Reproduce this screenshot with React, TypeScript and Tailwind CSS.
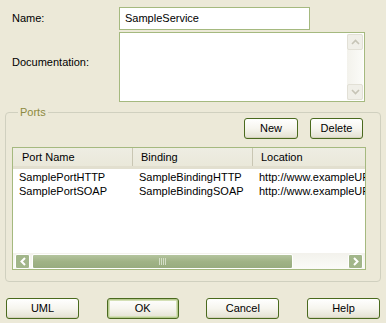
import React from 'react';

// Botão estilo XP (tema oliva)
function XpButton({ label, width, isDefault }: { label: string; width: string; isDefault?: boolean }) {
  return (
    <button
      className={`${width} h-[21px] rounded-[3px] border border-[#4A6A1E] bg-gradient-to-b from-[#FFFFFF] via-[#F6F5EE] to-[#E3E1D1] text-[11px] text-black leading-none ${
        isDefault ? 'shadow-[inset_0_0_0_1px_#B6C98E,inset_0_0_0_2px_#D4E0B6]' : 'shadow-[inset_0_-1px_0_#D6D2BE]'
      }`}
    >
      {label}
    </button>
  );
}

function ChevronUp({ color }: { color: string }) {
  return (
    <svg width="9" height="6" viewBox="0 0 9 6">
      <path d="M1 5 L4.5 1.5 L8 5" fill="none" stroke={color} strokeWidth="1.6" />
    </svg>
  );
}

function ChevronDown({ color }: { color: string }) {
  return (
    <svg width="9" height="6" viewBox="0 0 9 6">
      <path d="M1 1 L4.5 4.5 L8 1" fill="none" stroke={color} strokeWidth="1.6" />
    </svg>
  );
}

function ChevronLeft() {
  return (
    <svg width="6" height="9" viewBox="0 0 6 9">
      <path d="M5 1 L1.5 4.5 L5 8" fill="none" stroke="#FFFFFF" strokeWidth="2" />
    </svg>
  );
}

function ChevronRight() {
  return (
    <svg width="6" height="9" viewBox="0 0 6 9">
      <path d="M1 1 L4.5 4.5 L1 8" fill="none" stroke="#FFFFFF" strokeWidth="2" />
    </svg>
  );
}

const ports = [
  { name: 'SamplePortHTTP', binding: 'SampleBindingHTTP', location: 'http://www.exampleURL.com/http' },
  { name: 'SamplePortSOAP', binding: 'SampleBindingSOAP', location: 'http://www.exampleURL.com/soap' },
];

export default function App() {
  return (
    <div className="w-[386px] h-[323px] bg-[#ECE9D8] font-['Tahoma','Liberation_Sans',sans-serif] text-[11px] text-black pt-[7px] overflow-hidden">
      {/* Nome */}
      <div className="flex items-center h-[23px]">
        <span className="w-[119px] pl-[12px]">Name:</span>
        <div className="w-[191px] h-[23px] border border-[#A5B97F] bg-white flex items-center px-[5px]">SampleService</div>
      </div>

      {/* Documentação */}
      <div className="flex h-[70px] mt-[2px]">
        <span className="w-[119px] pl-[12px] mt-[22px]">Documentation:</span>
        <div className="w-[246px] h-[70px] border border-[#A5B97F] bg-white flex justify-end p-[1px]">
          <div className="w-[16px] h-full bg-gradient-to-r from-[#F3F2EC] to-[#FBFBF8] flex flex-col justify-between">
            <div className="h-[16px] rounded-[2px] border border-[#E2E0D6] bg-[#F0EFE8] flex items-center justify-center">
              <ChevronUp color="#C6C4B6" />
            </div>
            <div className="h-[16px] rounded-[2px] border border-[#E2E0D6] bg-[#F0EFE8] flex items-center justify-center">
              <ChevronDown color="#C6C4B6" />
            </div>
          </div>
        </div>
      </div>

      {/* Portas */}
      <fieldset className="mx-[5px] mt-[4px] h-[176px] border border-[#D0D0BF] rounded-[4px] px-[6px] pb-[10px]">
        <legend className="ml-[6px] px-[2px] text-[#8C8A40] leading-[13px]">Ports</legend>

        <div className="flex justify-end gap-[12px] pr-[11px] -mt-[1px]">
          <XpButton label="New" width="w-[54px]" />
          <XpButton label="Delete" width="w-[53px]" />
        </div>

        <div className="mt-[8px] w-[354px] h-[123px] border border-[#A5B97F] bg-white flex flex-col overflow-hidden">
          {/* Cabeçalho */}
          <div className="flex h-[21px] shrink-0 bg-gradient-to-b from-[#EEEDE3] to-[#EAE8DA] border-b-[3px] border-[#E2DFCF]">
            <div className="w-[120px] pl-[9px] flex items-center border-r border-[#C9C6B3]">Port Name</div>
            <div className="w-[120px] pl-[8px] flex items-center border-r border-[#C9C6B3]">Binding</div>
            <div className="flex-1 pl-[8px] flex items-center">Location</div>
          </div>

          {/* Linhas */}
          <div className="flex-1 pt-[1px]">
            {ports.map(p => (
              <div key={p.name} className="flex h-[14px] items-center whitespace-nowrap">
                <div className="w-[120px] pl-[6px]">{p.name}</div>
                <div className="w-[120px] pl-[6px]">{p.binding}</div>
                <div className="flex-1 pl-[6px] overflow-hidden">{p.location}</div>
              </div>
            ))}
          </div>

          {/* Barra de rolagem horizontal */}
          <div className="h-[16px] shrink-0 flex items-center gap-[2px] px-[2px] bg-gradient-to-b from-[#F3F2EC] to-[#FBFBF8]">
            <div className="w-[15px] h-[15px] rounded-[2px] bg-[#A2B68A] border border-[#FFFFFF] flex items-center justify-center">
              <ChevronLeft />
            </div>
            <div className="w-[261px] h-[15px] rounded-[2px] border border-white bg-gradient-to-b from-[#B4C49E] via-[#A0B386] to-[#98AC7F] flex items-center justify-center gap-[1px]">
              {[0, 1, 2, 3].map(i => (
                <span key={i} className="w-[1px] h-[7px] bg-[#D4DEC7]" />
              ))}
            </div>
            <div className="flex-1" />
            <div className="w-[15px] h-[15px] rounded-[2px] bg-[#A2B68A] border border-[#FFFFFF] flex items-center justify-center">
              <ChevronRight />
            </div>
          </div>
        </div>
      </fieldset>

      {/* Botões inferiores */}
      <div className="flex justify-between px-[6px] mt-[16px]">
        <XpButton label="UML" width="w-[73px]" />
        <XpButton label="OK" width="w-[72px]" isDefault />
        <XpButton label="Cancel" width="w-[73px]" />
        <XpButton label="Help" width="w-[73px]" />
      </div>
    </div>
  );
}
